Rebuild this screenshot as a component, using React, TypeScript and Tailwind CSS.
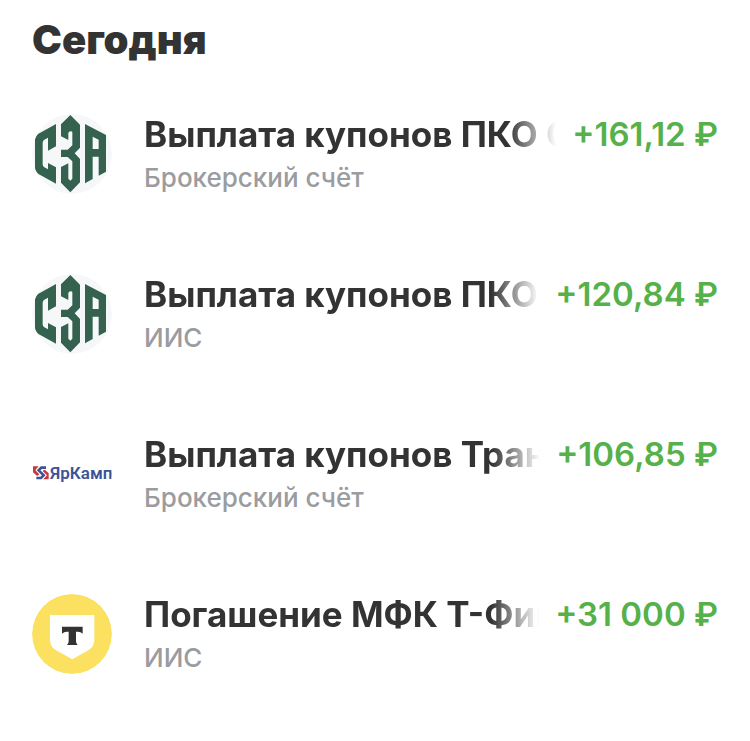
import type { ReactNode } from "react";

type Operation = {
  id: number;
  title: string;
  account: string;
  amount: string;
  logo: ReactNode;
};

function SzaLogo() {
  return (
    <svg viewBox="36 42 240 240" className="size-20" role="img" aria-label="СЗА">
      <circle cx="156" cy="162" r="120" fill="#f6f7f8" />
      <g fill="#35624f">
        <path d="M108 72 L54 102 Q45 108 45 118 V205 Q45 215 54 221 L108 251 V202 L84 189 V208 L73 202 Q68 199 68 193 V128 Q68 122 73 119 L84 113 V152 L108 139 Z" />
        <path d="M151 45 L180 74 V143 L164 160 L180 177 V247 L151 277 L123 248 V201 L145 190 V236 L151 242 L157 236 V184 L143 171 H123 V149 H143 L157 136 V97 Q157 94 153 94 Q145 94 145 100 V120 L123 109 V73 Z" />
        <path d="M195 72 L258 105 V215 L236 227 V170 H218 V237 L195 250 Z M218 110 V147 H236 V119 Z" fillRule="evenodd" />
      </g>
    </svg>
  );
}

function YarKampLogo() {
  return (
    <svg viewBox="36 42 240 240" className="size-20" role="img" aria-label="ЯрКамп">
      <path d="M39 139 H56 L48 148 L60 160 L52 169 L39 157 Z" fill="#c9383f" />
      <path d="M86 178 H69 L77 169 L65 157 L73 148 L86 160 Z" fill="#c9383f" />
      <path d="M78 143 H64 L56 151 L71 166 L63 174 H49" fill="none" stroke="#fff" strokeWidth="14" />
      <path d="M78 143 H64 L56 151 L71 166 L63 174 H49" fill="none" stroke="#3c5496" strokeWidth="8" />
      <text
        x="90"
        y="178"
        fill="#3c5496"
        fontSize="51"
        fontWeight="600"
        fontFamily="Roboto, sans-serif"
      >
        ЯрКамп
      </text>
    </svg>
  );
}

function TBankLogo() {
  return (
    <svg viewBox="36 30 240 240" className="size-20" role="img" aria-label="Т-Банк">
      <circle cx="156" cy="150" r="120" fill="#fce060" />
      <path d="M90 93 H223 V167 Q223 188 205 199 L157 226 L108 199 Q90 188 90 167 Z" fill="#fff" />
      <path
        d="M126 128 H188 V149 Q182 143 174 143 H168 V172 Q168 179 173 183 H141 Q146 179 146 172 V143 H140 Q132 143 126 149 Z"
        fill="#333"
      />
    </svg>
  );
}

const operations: Operation[] = [
  {
    id: 1,
    title: "Выплата купонов ПКО С",
    account: "Брокерский счёт",
    amount: "+161,12 ₽",
    logo: <SzaLogo />,
  },
  {
    id: 2,
    title: "Выплата купонов ПКО",
    account: "ИИС",
    amount: "+120,84 ₽",
    logo: <SzaLogo />,
  },
  {
    id: 3,
    title: "Выплата купонов Тран",
    account: "Брокерский счёт",
    amount: "+106,85 ₽",
    logo: <YarKampLogo />,
  },
  {
    id: 4,
    title: "Погашение МФК Т-Фин",
    account: "ИИС",
    amount: "+31 000 ₽",
    logo: <TBankLogo />,
  },
];

function OperationRow({ title, account, amount, logo }: Operation) {
  return (
    <li className="flex items-center gap-8">
      <div className="shrink-0 overflow-hidden rounded-full">{logo}</div>
      <div className="min-w-0 flex-1 pt-1">
        <div className="flex items-center gap-4 leading-10">
          {/* long titles fade out before the amount */}
          <div className="min-w-0 flex-1 overflow-hidden whitespace-nowrap text-[35px] font-bold mask-r-from-[calc(100%-48px)] mask-r-to-100%">
            {title}
          </div>
          <div className="shrink-0 whitespace-nowrap text-[33px] font-semibold text-[#56b14b]">
            {amount}
          </div>
        </div>
        <div className="mt-1 text-[26px] leading-10 font-medium text-[#9a9c9f]">{account}</div>
      </div>
    </li>
  );
}

export default function App() {
  return (
    <main className="min-h-screen bg-white px-8 pt-4 pb-16 font-['Inter',sans-serif] text-[#333]">
      <h1 className="text-[40px] leading-12 font-black">Сегодня</h1>
      <ul className="mt-[46px] flex flex-col gap-18">
        {operations.map((op) => (
          <OperationRow key={op.id} {...op} />
        ))}
      </ul>
    </main>
  );
}
